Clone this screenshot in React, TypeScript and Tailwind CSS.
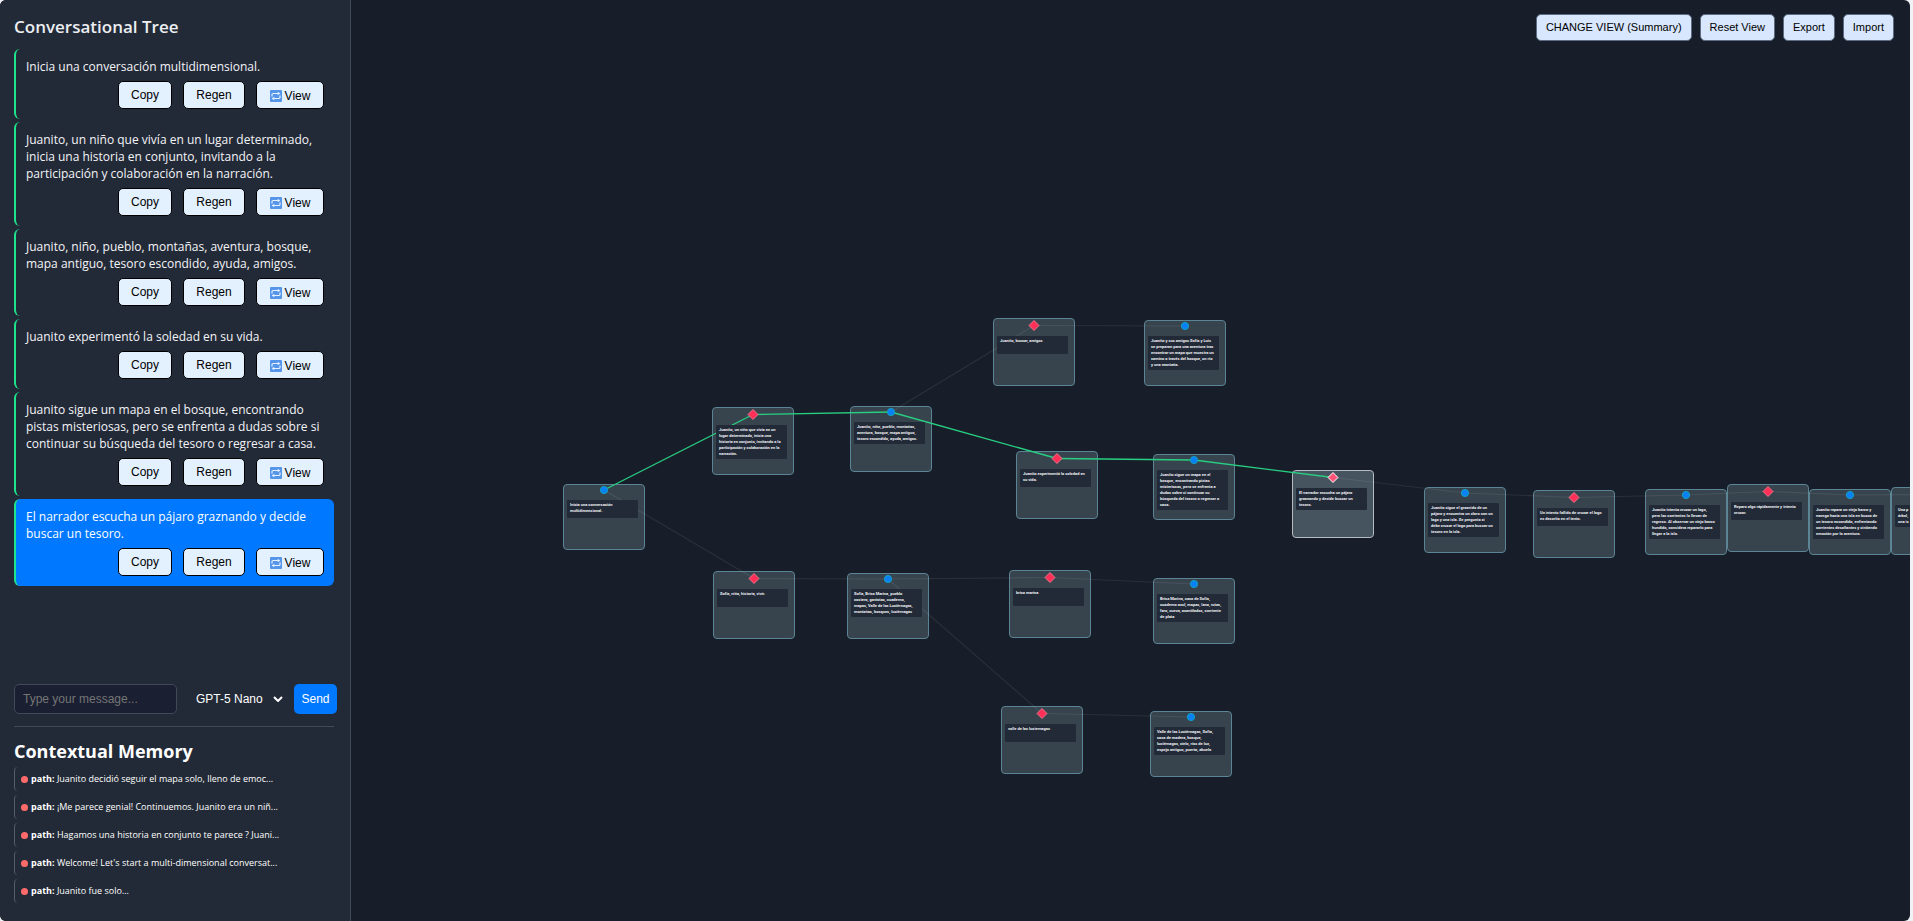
import React from "react";

type Kind = "circle" | "diamond";

interface TreeNode {
  id: string;
  kind: Kind;
  x: number;
  y: number;
  lines: string[];
  active?: boolean;
}

const CARD_CENTER = 41;

const nodes: TreeNode[] = [
  { id: "root", kind: "circle", x: 212, y: 484, lines: ["Inicia una conversación", "multidimensional."] },
  { id: "a1", kind: "diamond", x: 361, y: 407, lines: ["Juanito, un niño que vivía en un", "lugar determinado, inicia una", "historia en conjunto, invitando a la", "participación y colaboración en la", "narración."] },
  { id: "a2", kind: "circle", x: 499, y: 406, lines: ["Juanito, niño, pueblo, montañas,", "aventura, bosque, mapa antiguo,", "tesoro escondido, ayuda, amigos."] },
  { id: "b1", kind: "diamond", x: 642, y: 318, lines: ["Juanito, buscar, amigos"] },
  { id: "b2", kind: "circle", x: 793, y: 320, lines: ["Juanito y sus amigos Sofía y Luis", "se preparan para una aventura tras", "encontrar un mapa que muestra un", "camino a través del bosque, un río", "y una montaña."] },
  { id: "a3", kind: "diamond", x: 665, y: 451, lines: ["Juanito experimentó la soledad en", "su vida."] },
  { id: "a4", kind: "circle", x: 802, y: 454, lines: ["Juanito sigue un mapa en el", "bosque, encontrando pistas", "misteriosas, pero se enfrenta a", "dudas sobre si continuar su", "búsqueda del tesoro o regresar a", "casa."] },
  { id: "a5", kind: "diamond", x: 941, y: 470, active: true, lines: ["El narrador escucha un pájaro", "graznando y decide buscar un", "tesoro."] },
  { id: "a6", kind: "circle", x: 1073, y: 487, lines: ["Juanito sigue el graznido de un", "pájaro y encuentra un claro con un", "lago y una isla. Se pregunta si", "debe cruzar el lago para buscar un", "tesoro en la isla."] },
  { id: "a7", kind: "diamond", x: 1182, y: 490, lines: ["Un intento fallido de cruzar el lago", "es descrito en el texto."] },
  { id: "a8", kind: "circle", x: 1294, y: 489, lines: ["Juanito intenta cruzar un lago,", "pero las corrientes lo llevan de", "regreso. Al observar un viejo barco", "hundido, considera repararlo para", "llegar a la isla."] },
  { id: "a9", kind: "diamond", x: 1376, y: 484, lines: ["Reparo algo rápidamente y intento", "cruzar."] },
  { id: "a10", kind: "circle", x: 1458, y: 489, lines: ["Juanito repara un viejo barco y", "navega hacia una isla en busca de", "un tesoro escondido, enfrentando", "corrientes desafiantes y sintiendo", "emoción por la aventura."] },
  { id: "a11", kind: "diamond", x: 1540, y: 487, lines: ["Una p", "árbol,", "una is"] },
  { id: "c1", kind: "diamond", x: 362, y: 571, lines: ["Sofía, niña, historia, vivir."] },
  { id: "c2", kind: "circle", x: 496, y: 573, lines: ["Sofía, Brisa Marina, pueblo", "costero, gaviotas, cuaderno,", "mapas, Valle de las Luciérnagas,", "montañas, bosques, luciérnagas"] },
  { id: "c3", kind: "diamond", x: 658, y: 570, lines: ["brisa marina"] },
  { id: "c4", kind: "circle", x: 802, y: 578, lines: ["Brisa Marina, casa de Sofía,", "cuaderno azul, mapas, lana, rutas,", "faro, cueva, acantilados, corriente", "de plata"] },
  { id: "d1", kind: "diamond", x: 650, y: 706, lines: ["valle de las luciernagas"] },
  { id: "d2", kind: "circle", x: 799, y: 711, lines: ["Valle de las Luciérnagas, Sofía,", "casa de madera, bosque,", "luciérnagas, cielo, ríos de luz,", "espejo antiguo, puerta, abuelo"] },
];

const edges: [string, string, boolean][] = [
  ["a2", "b1", false],
  ["b1", "b2", false],
  ["root", "c1", false],
  ["c1", "c2", false],
  ["c2", "c3", false],
  ["c3", "c4", false],
  ["c2", "d1", false],
  ["d1", "d2", false],
  ["a5", "a6", false],
  ["a6", "a7", false],
  ["a7", "a8", false],
  ["a8", "a9", false],
  ["a9", "a10", false],
  ["a10", "a11", false],
  ["root", "a1", true],
  ["a1", "a2", true],
  ["a2", "a3", true],
  ["a3", "a4", true],
  ["a4", "a5", true],
];

const anchor = (id: string) => {
  const n = nodes.find((item) => item.id === id)!;
  return { x: n.x + CARD_CENTER, y: n.y + (n.kind === "circle" ? 6 : 7.5) };
};

const messages = [
  { text: "Inicia una conversación multidimensional." },
  { text: "Juanito, un niño que vivía en un lugar determinado, inicia una historia en conjunto, invitando a la participación y colaboración en la narración." },
  { text: "Juanito, niño, pueblo, montañas, aventura, bosque, mapa antiguo, tesoro escondido, ayuda, amigos." },
  { text: "Juanito experimentó la soledad en su vida." },
  { text: "Juanito sigue un mapa en el bosque, encontrando pistas misteriosas, pero se enfrenta a dudas sobre si continuar su búsqueda del tesoro o regresar a casa." },
  { text: "El narrador escucha un pájaro graznando y decide buscar un tesoro.", active: true },
];

const memories = [
  "Juanito decidió seguir el mapa solo, lleno de emoc...",
  "¡Me parece genial! Continuemos. Juanito era un niñ...",
  "Hagamos una historia en conjunto te parece ? Juani...",
  "Welcome! Let's start a multi-dimensional conversat...",
  "Juanito fue solo...",
];

function RepeatIcon() {
  return (
    <svg viewBox="0 0 24 24" className="size-3 shrink-0" aria-hidden="true">
      <rect width="24" height="24" rx="2" fill="#5596ea" />
      <path d="M4 13V9.5Q4 7 6.500 7H17" fill="none" stroke="#e6f1ff" strokeWidth="2.400" />
      <path d="M15.500 3.500L20.500 7L15.500 10.500Z" fill="#e6f1ff" />
      <path d="M20 11V14.500Q20 17 17.500 17H7" fill="none" stroke="#e6f1ff" strokeWidth="2.400" />
      <path d="M8.500 13.500L3.500 17L8.500 20.500Z" fill="#e6f1ff" />
    </svg>
  );
}

function CardButton({ className, children }: { className: string; children: React.ReactNode }) {
  return (
    <button
      type="button"
      className={`flex h-7 items-center justify-center gap-[3px] rounded-[5px] border border-black bg-[#e3f0fe] font-['Liberation_Sans',Arial,sans-serif] text-[12px] text-black ${className}`}
    >
      {children}
    </button>
  );
}

function MessageCard({ text, active }: { text: string; active?: boolean }) {
  return (
    <li
      className={`rounded-md border-l-2 border-[#1fe28c] px-2.5 pt-[9px] pb-2.5 text-[12px] leading-[17px] ${
        active ? "bg-[#0078ff] text-white" : "text-[#f3f4f7]"
      }`}
    >
      <p>{text}</p>
      <div className="mt-1.5 flex justify-end gap-[11px]">
        <CardButton className="w-[54px]">Copy</CardButton>
        <CardButton className="w-[62px]">Regen</CardButton>
        <CardButton className="w-[68px] pt-0.5">
          <RepeatIcon />
          View
        </CardButton>
      </div>
    </li>
  );
}

function Sidebar() {
  return (
    <aside className="flex w-[351px] shrink-0 flex-col border-r border-[#414857] bg-[#232a37] px-3.5 pb-[18px] text-white">
      <h2 className="mt-[15px] text-[17px] leading-6 font-semibold text-[#eceef2]">Conversational Tree</h2>
      <ul className="mt-2.5 mr-0.5 flex flex-1 flex-col gap-[3px]">
        {messages.map((m) => (
          <MessageCard key={m.text} text={m.text} active={m.active} />
        ))}
      </ul>
      <form
        className="-mr-px flex h-[30px] items-stretch font-['Liberation_Sans',Arial,sans-serif] text-[12px]"
        onSubmit={(e) => e.preventDefault()}
      >
        <input
          type="text"
          aria-label="Message"
          placeholder="Type your message..."
          className="w-0 flex-1 rounded-[5px] border border-[#414859] bg-[#1a1f31] px-2 text-white placeholder:text-[#757575]"
        />
        <span className="relative ml-2.5 flex w-[99px]">
          <select aria-label="Model" className="w-full appearance-none bg-transparent pl-[9px] text-white">
            <option>GPT-5 Nano</option>
          </select>
          <svg viewBox="0 0 10 6" className="pointer-events-none absolute top-3 right-[3px] h-1.5 w-2.5" aria-hidden="true">
            <path d="M1 1L5 5L9 1" fill="none" stroke="#fff" strokeWidth="2" />
          </svg>
        </span>
        <button type="submit" className="ml-2 w-[43px] rounded-[5px] bg-[#0078ff] text-white">
          Send
        </button>
      </form>
      <section className="mt-3 mr-0.5 border-t border-[#414857] pt-2.5">
        <h2 className="mb-0.5 text-[18px] leading-7 font-bold">Contextual Memory</h2>
        <ul className="flex flex-col gap-1 text-[9px] leading-6">
          {memories.map((m) => (
            <li key={m} className="flex items-center rounded-sm border-l border-[#565d69] pl-1.5">
              <span className="mr-[3px] size-[7px] rounded-full bg-[#ff6b6b]" />
              <span className="whitespace-nowrap">
                <strong className="font-bold">path:</strong> {m}
              </span>
            </li>
          ))}
        </ul>
      </section>
    </aside>
  );
}

function NodeCard({ node }: { node: TreeNode }) {
  return (
    <div
      className={`absolute w-[82px] rounded-[4px] border ${node.kind === "circle" ? "h-[66px]" : "h-[68px]"} ${
        node.active ? "border-[#b4bcc2] bg-[#46545f]" : "border-[#5b8494] bg-[#37444e]"
      }`}
      style={{ left: node.x, top: node.y }}
    />
  );
}

function NodeLabel({ node }: { node: TreeNode }) {
  return (
    <p
      className="absolute min-h-[18px] w-[71px] rounded-[1px] bg-[#232a37] px-[3px] py-[2px] font-['Roboto','Open_Sans',sans-serif] text-[4px] leading-[6px] font-bold whitespace-nowrap text-[#eef0f4]"
      style={{ left: node.x + 4, top: node.y + (node.kind === "circle" ? 16 : 18) }}
    >
      {node.lines.map((line) => (
        <span key={line} className="block">
          {line}
        </span>
      ))}
    </p>
  );
}

function Marker({ node }: { node: TreeNode }) {
  const { x, y } = anchor(node.id);
  if (node.kind === "circle") {
    return <circle cx={x} cy={y} r="3.600" fill="#0a80f5" stroke="#12a0c0" strokeWidth="1" />;
  }
  return (
    <path
      d={`M${x} ${y - 5}L${x + 5} ${y}L${x} ${y + 5}L${x - 5} ${y}Z`}
      fill={node.active ? "#ff5578" : "#ff2f58"}
      stroke={node.active ? "#ffffff" : "#e8768c"}
      strokeWidth="1"
    />
  );
}

function TreeCanvas() {
  return (
    <div className="absolute inset-0 overflow-hidden">
      {nodes.map((n) => (
        <NodeCard key={n.id} node={n} />
      ))}
      <svg className="absolute inset-0 size-full" aria-hidden="true">
        {edges.map(([from, to, onPath]) => {
          const a = anchor(from);
          const b = anchor(to);
          return (
            <line
              key={`${from}-${to}`}
              x1={a.x}
              y1={a.y}
              x2={b.x}
              y2={b.y}
              stroke={onPath ? "#28cf82" : "rgba(255,255,255,0.08)"}
              strokeWidth={onPath ? 1.3 : 1.2}
            />
          );
        })}
      </svg>
      {nodes.map((n) => (
        <NodeLabel key={n.id} node={n} />
      ))}
      <svg className="absolute inset-0 size-full" aria-hidden="true">
        {nodes.map((n) => (
          <Marker key={n.id} node={n} />
        ))}
      </svg>
    </div>
  );
}

const toolbar = ["CHANGE VIEW (Summary)", "Reset View", "Export", "Import"];

export default function App() {
  return (
    <div className="min-h-screen bg-[#f1f2f5] pr-[3px] font-['Open_Sans','Noto_Sans',sans-serif]">
      <div className="flex min-h-screen overflow-hidden rounded-md bg-[#181e29]">
        <Sidebar />
        <main className="relative min-w-0 flex-1">
          <TreeCanvas />
          <div className="relative flex justify-end gap-2 px-4 pt-3.5">
            {toolbar.map((label) => (
              <button
                key={label}
                type="button"
                className="h-[27px] rounded-[5px] border border-[#5d6c82] bg-[#d8e7fe] px-[9px] font-['Liberation_Sans',Arial,sans-serif] text-[11px] text-black"
              >
                {label}
              </button>
            ))}
          </div>
        </main>
      </div>
    </div>
  );
}
